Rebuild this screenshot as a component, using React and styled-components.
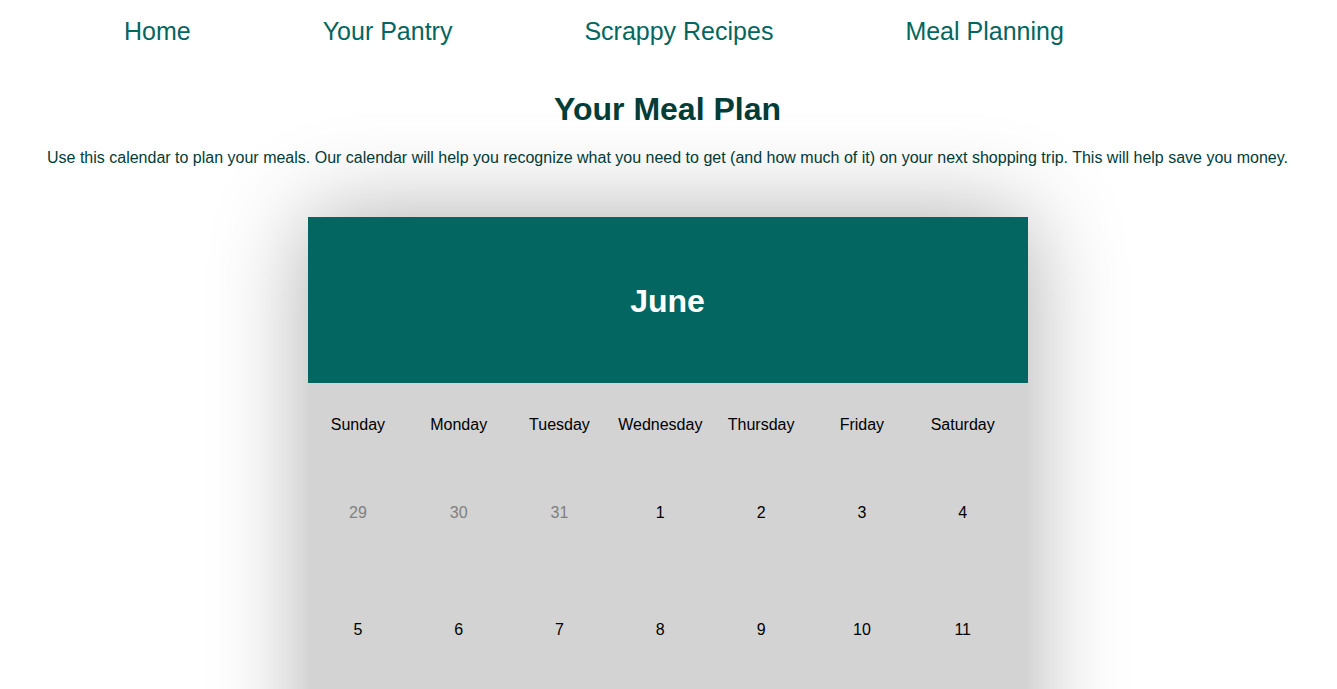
import React from 'react';
import styled, {createGlobalStyle} from 'styled-components';

const GlobalStyle = createGlobalStyle`
  html, body {
    margin: 0;
    padding: 0;
    background: #fff;
    font-family: "Liberation Sans", Arial, Helvetica, sans-serif;
    overflow: hidden;
  }
`;

const Nav = styled.nav`
  display: flex;
  gap: 132px;
  padding: 16px 0 0 124px;
  height: 30px;

  a {
    color: #04665f;
    font-size: 25px;
    text-decoration: none;
    line-height: 30px;
  }
`;

const Main = styled.main`
  display: flex;
  flex-direction: column;
  align-items: center;
  padding-right: 2px;
`;

const Title = styled.h1`
  margin: 44px 0 0;
  font-size: 32px;
  line-height: 38px;
  color: #023d38;
`;

const Intro = styled.p`
  margin: 21px 0 0;
  font-size: 16px;
  line-height: 18px;
  color: #023d38;
`;

const Calendar = styled.section`
  width: 720px;
  margin-top: 50px;
  box-shadow: 0 0 90px rgba(0, 0, 0, 0.33);
  background: #d3d3d3;
`;

const MonthBar = styled.header`
  height: 166px;
  box-sizing: border-box;
  padding-top: 2px;
  background: #036660;
  display: flex;
  align-items: center;
  justify-content: center;

  h2 {
    margin: 0;
    color: #fff;
    font-size: 32px;
    font-weight: bold;
  }
`;

const Grid = styled.div`
  display: grid;
  grid-template-columns: repeat(7, 100.8px);
`;

const DayName = styled.div`
  height: 82px;
  box-sizing: border-box;
  padding-top: 2px;
  display: flex;
  align-items: center;
  justify-content: center;
  font-size: 16px;
  color: #000;
`;

const DateCell = styled.div`
  height: 117px;
  padding-top: 39px;
  box-sizing: border-box;
  text-align: center;
  font-size: 16px;
  line-height: 18px;
  color: ${p => (p.$faded ? '#808080' : '#000')};
`;

const days = ['Sunday', 'Monday', 'Tuesday', 'Wednesday', 'Thursday', 'Friday', 'Saturday'];
const dates = [
  {n: 29, faded: true}, {n: 30, faded: true}, {n: 31, faded: true},
  {n: 1}, {n: 2}, {n: 3}, {n: 4},
  {n: 5}, {n: 6}, {n: 7}, {n: 8}, {n: 9}, {n: 10}, {n: 11},
  {n: 12}, {n: 13}, {n: 14}, {n: 15}, {n: 16}, {n: 17}, {n: 18},
];

export default function App() {
  return (
    <>
      <GlobalStyle/>
      <Nav>
        <a href="#">Home</a>
        <a href="#">Your Pantry</a>
        <a href="#">Scrappy Recipes</a>
        <a href="#">Meal Planning</a>
      </Nav>
      <Main>
        <Title>Your Meal Plan</Title>
        <Intro>
          Use this calendar to plan your meals. Our calendar will help you recognize what you need to get (and how much of it) on your next shopping trip. This will help save you money.
        </Intro>
        <Calendar>
          <MonthBar><h2>June</h2></MonthBar>
          <Grid>
            {days.map(d => <DayName key={d}>{d}</DayName>)}
            {dates.map((d, i) => <DateCell key={i} $faded={d.faded}>{d.n}</DateCell>)}
          </Grid>
        </Calendar>
      </Main>
    </>
  );
}
